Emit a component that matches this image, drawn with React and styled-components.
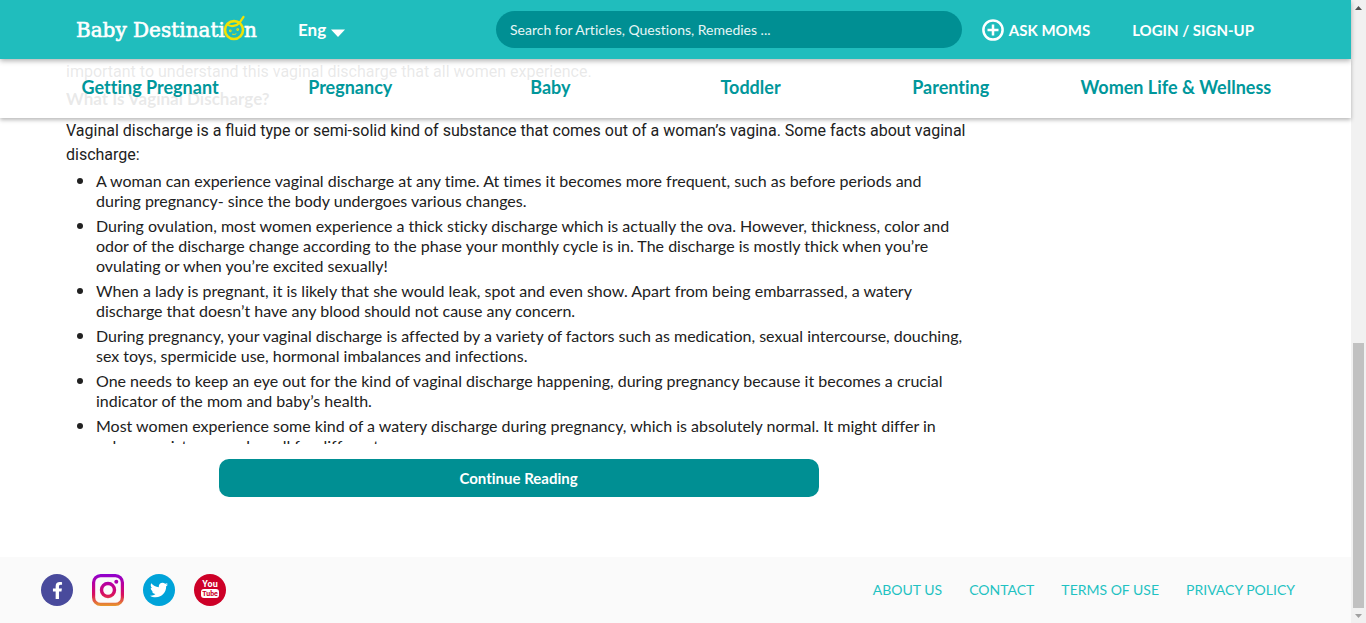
import React from "react";
import styled, { createGlobalStyle } from "styled-components";
import { FaFacebookF, FaTwitter } from "react-icons/fa";

const Global = createGlobalStyle`
  *, *::before, *::after { box-sizing: border-box; }
  body { margin: 0; background: #fff; color: #212121; font-family: Lato, "Liberation Sans", sans-serif; font-variant-ligatures: none; }
  a { text-decoration: none; color: inherit; }
`;

const Screen = styled.div`
  display: grid;
  grid-template-columns: minmax(0, 1fr) 15px;
  height: 100vh;
  overflow: hidden;
`;

const Page = styled.div`
  display: flex;
  flex-direction: column;
  min-width: 0;
`;

const TopBar = styled.header`
  position: relative;
  z-index: 2;
  display: flex;
  align-items: center;
  height: 59px;
  flex: none;
  padding: 0 97px 0 76px;
  background: #20bdbd;
  color: #fff;
  box-shadow: 0 2px 5px rgba(0, 0, 0, 0.3);
`;

const Logo = styled.a`
  display: flex;
  align-items: center;
  width: 180px;
  flex: none;
  font: 400 20px/28px "DejaVu Serif", serif;
  white-space: nowrap;
  -webkit-text-stroke: 0.6px #fff;
  svg { flex: none; width: 22px; height: 28px; margin: 0 -1px 4px -2px; }
`;

const Language = styled.label`
  display: flex;
  align-items: center;
  position: relative;
  margin-left: 42px;
  svg { position: absolute; right: 0; top: 8px; pointer-events: none; }
`;

const LanguageSelect = styled.select`
  appearance: none;
  width: 47px;
  height: 24px;
  padding: 0;
  border: 0;
  background: transparent;
  color: #fff;
  font: 700 17px/24px Lato, sans-serif;
`;

const SearchForm = styled.form`
  flex: 1;
  margin-left: 151px;
`;

const SearchInput = styled.input`
  display: block;
  width: 100%;
  height: 37px;
  padding: 0 14px;
  border: 0;
  border-radius: 19px;
  background: #008f93;
  color: #fff;
  font: 400 14px/20px Lato, sans-serif;
  font-variant-ligatures: none;
  &::placeholder { color: #e6f6f6; opacity: 1; }
`;

const BarLink = styled.a`
  display: flex;
  align-items: center;
  gap: 5px;
  margin-left: ${(p) => p.$space}px;
  font-size: 15px;
  line-height: 24px;
  font-weight: 700;
  white-space: nowrap;
`;

const Main = styled.main`
  position: relative;
  flex: 1;
`;

const Nav = styled.nav`
  position: absolute;
  inset: 0 0 auto;
  z-index: 1;
  display: flex;
  height: 59px;
  padding: 0 50px;
  background: rgba(255, 255, 255, 0.9);
  box-shadow: 0 2px 4px rgba(0, 0, 0, 0.28);
`;

const NavLink = styled.a`
  flex: ${(p) => (p.$wide ? 5 : 4)} 1 0;
  padding-top: 16px;
  text-align: center;
  color: #00979b;
  font-size: 18px;
  line-height: 24px;
  font-weight: 700;
  white-space: nowrap;
`;

const Article = styled.article`
  width: 67%;
  margin-left: 66px;
`;

const Excerpt = styled.div`
  height: 385px;
  padding-top: 1px;
  overflow: hidden;
`;

const Paragraph = styled.p`
  margin: 0 0 3px;
  font: 400 16px/24px Roboto, sans-serif;
`;

const Heading = styled.h2`
  margin: 0 0 8px;
  font: 700 17px/24px Lato, sans-serif;
  font-variant-ligatures: none;
`;

const List = styled.ul`
  margin: 0;
  padding: 0 2px 0 30px;
`;

const Item = styled.li`
  margin-bottom: 4px;
  font-size: 16px;
  line-height: 20px;
  &::marker { font-family: Roboto, sans-serif; font-size: 20px; }
`;

const Continue = styled.button`
  display: block;
  width: 600px;
  max-width: 100%;
  height: 38px;
  margin: 15px auto 0;
  border: 0;
  border-radius: 10px;
  background: #008f93;
  color: #fff;
  font: 700 15px/20px Lato, sans-serif;
  font-variant-ligatures: none;
`;

const Footer = styled.footer`
  display: flex;
  align-items: center;
  justify-content: space-between;
  flex: none;
  height: 66px;
  padding: 0 56px 0 41px;
  background: #fafafa;
`;

const Group = styled.div`
  display: flex;
  align-items: center;
  gap: ${(p) => p.$gap}px;
`;

const Social = styled.a`
  display: flex;
  align-items: center;
  justify-content: center;
  width: 32px;
  height: 32px;
  border-radius: 50%;
  background: ${(p) => p.$color || "none"};
  color: #fff;
`;

const FooterLink = styled.a`
  color: #1fc2c2;
  font-size: 14px;
  line-height: 20px;
  white-space: nowrap;
`;

const Scrollbar = styled.div`
  display: flex;
  flex-direction: column;
  align-items: center;
  background: #f1f1f1;
  svg { flex: none; display: block; }
`;

const Track = styled.div`
  flex: 1;
  width: 11px;
  display: flex;
  flex-direction: column;
  justify-content: flex-end;
`;

const Thumb = styled.div`
  height: 44.7%;
  background: #c1c1c1;
`;

const nav = ["Getting Pregnant", "Pregnancy", "Baby", "Toddler", "Parenting", "Women Life & Wellness"];

const facts = [
  "A woman can experience vaginal discharge at any time. At times it becomes more frequent, such as before periods and during pregnancy- since the body undergoes various changes.",
  "During ovulation, most women experience a thick sticky discharge which is actually the ova. However, thickness, color and odor of the discharge change according to the phase your monthly cycle is in. The discharge is mostly thick when you’re ovulating or when you’re excited sexually!",
  "When a lady is pregnant, it is likely that she would leak, spot and even show. Apart from being embarrassed, a watery discharge that doesn’t have any blood should not cause any concern.",
  "During pregnancy, your vaginal discharge is affected by a variety of factors such as medication, sexual intercourse, douching, sex toys, spermicide use, hormonal imbalances and infections.",
  "One needs to keep an eye out for the kind of vaginal discharge happening, during pregnancy because it becomes a crucial indicator of the mom and baby’s health.",
  "Most women experience some kind of a watery discharge during pregnancy, which is absolutely normal. It might differ in color, consistency and smell for different women.",
];

const BabyFace = () => (
  <svg viewBox="0 0 22 28" fill="none" stroke="#f2e205" strokeWidth="2.600" strokeLinecap="round" aria-hidden="true">
    <circle cx="11" cy="16" r="9" />
    <path d="M4.500 10.500c3 2.500 9 2 12.500-2.300L20.500 2.800" strokeWidth="2.200" />
    <path d="M5.500 9.500c3-2.500 7-2.500 11-1" strokeWidth="1.600" />
    <circle cx="7.300" cy="16.800" r=".5" strokeWidth="1.800" />
    <circle cx="14.700" cy="15.600" r=".5" strokeWidth="1.800" />
    <path d="M9.500 20.300q2 .8 3.500-.4" strokeWidth="1" />
  </svg>
);

const Instagram = () => (
  <svg width="32" height="32" viewBox="0 0 32 32" fill="none" aria-hidden="true">
    <defs>
      <linearGradient id="ig" x1="16" y1="0" x2="16" y2="32" gradientUnits="userSpaceOnUse">
        <stop offset="0" stopColor="#8d00d0" />
        <stop offset=".35" stopColor="#bd0098" />
        <stop offset=".65" stopColor="#d9105c" />
        <stop offset="1" stopColor="#e89a2c" />
      </linearGradient>
    </defs>
    <rect x="1.600" y="1.600" width="28.800" height="28.800" rx="7" stroke="url(#ig)" strokeWidth="3.200" />
    <circle cx="16" cy="16" r="6.500" stroke="url(#ig)" strokeWidth="3.400" />
    <circle cx="24.300" cy="7.800" r="2" fill="#ad00ae" />
  </svg>
);

const YouTube = () => (
  <svg width="32" height="32" viewBox="0 0 32 32" fill="#fff" aria-hidden="true">
    <text x="16" y="13" textAnchor="middle" fontFamily="Roboto, sans-serif" fontWeight="700" fontSize="9">You</text>
    <rect x="7" y="15" width="18" height="9" rx="3" />
    <text x="16" y="22" textAnchor="middle" fill="#cd0027" fontFamily="Roboto, sans-serif" fontWeight="700" fontSize="7">Tube</text>
  </svg>
);

export default function App() {
  return (
    <Screen>
      <Global />
      <Page>
        <TopBar>
          <Logo href="#" aria-label="Baby Destination">
            Baby Destinati<BabyFace />n
          </Logo>
          <Language>
            <LanguageSelect aria-label="Language" defaultValue="Eng">
              <option>Eng</option>
            </LanguageSelect>
            <svg width="14" height="14" viewBox="0 0 14 14" aria-hidden="true"><path d="M0 3.500h14L7 11z" fill="#fff" /></svg>
          </Language>
          <SearchForm>
            <SearchInput aria-label="Search" placeholder="Search for Articles, Questions, Remedies ..." />
          </SearchForm>
          <BarLink href="#" $space={20}>
            <svg width="22" height="22" viewBox="0 0 22 22" fill="none" stroke="#fff" strokeWidth="2.500" aria-hidden="true">
              <circle cx="11" cy="11" r="9.600" />
              <path d="M11 5.500v11M5.500 11h11" />
            </svg>
            ASK MOMS
          </BarLink>
          <BarLink href="#" $space={42}>LOGIN / SIGN-UP</BarLink>
        </TopBar>
        <Main>
          <Nav>
            {nav.map((label, i) => (
              <NavLink key={label} href="#" $wide={i === 5}>{label}</NavLink>
            ))}
          </Nav>
          <Article>
            <Excerpt>
              <Paragraph>important to understand this vaginal discharge that all women experience.</Paragraph>
              <Heading>What Is Vaginal Discharge?</Heading>
              <Paragraph>
                Vaginal discharge is a fluid type or semi-solid kind of substance that comes out of a woman’s vagina. Some facts about vaginal discharge:
              </Paragraph>
              <List>
                {facts.map((fact) => <Item key={fact}>{fact}</Item>)}
              </List>
            </Excerpt>
            <Continue type="button">Continue Reading</Continue>
          </Article>
        </Main>
        <Footer>
          <Group $gap={19}>
            <Social href="#" $color="#494a9c" aria-label="Facebook"><FaFacebookF size={17} /></Social>
            <Social href="#" aria-label="Instagram"><Instagram /></Social>
            <Social href="#" $color="#00a3d9" aria-label="Twitter"><FaTwitter size={18} /></Social>
            <Social href="#" $color="#cd0027" aria-label="YouTube"><YouTube /></Social>
          </Group>
          <Group $gap={27}>
            <FooterLink href="#">ABOUT US</FooterLink>
            <FooterLink href="#">CONTACT</FooterLink>
            <FooterLink href="#">TERMS OF USE</FooterLink>
            <FooterLink href="#">PRIVACY POLICY</FooterLink>
          </Group>
        </Footer>
      </Page>
      <Scrollbar aria-hidden="true">
        <svg width="15" height="15" viewBox="0 0 15 15"><path d="M4 10h7L7.500 6z" fill="#505050" /></svg>
        <Track><Thumb /></Track>
        <svg width="15" height="15" viewBox="0 0 15 15"><path d="M4 6h7L7.500 10z" fill="#a0a0a0" /></svg>
      </Scrollbar>
    </Screen>
  );
}
